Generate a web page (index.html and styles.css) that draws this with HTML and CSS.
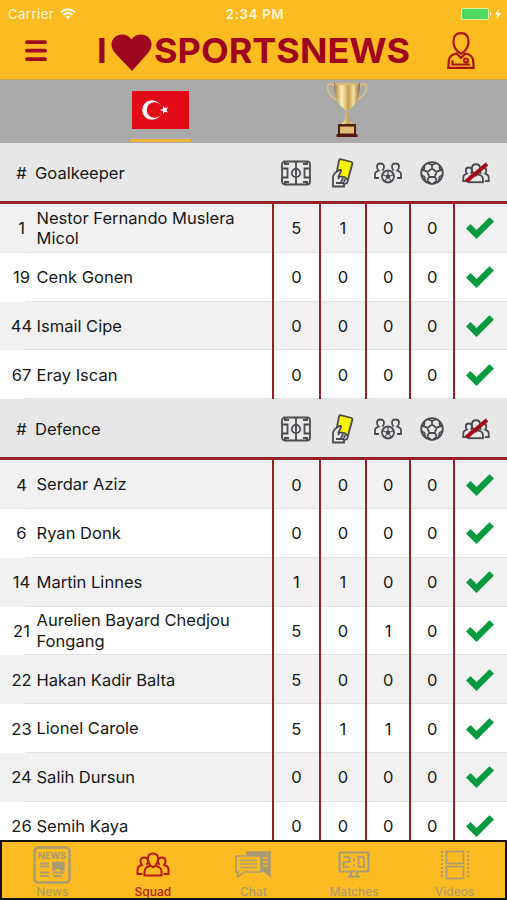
FILE: index.html
```html
<!DOCTYPE html>
<html lang="en">
<head>
    <meta charset="UTF-8">
    <meta name="viewport" content="width=device-width, initial-scale=1.0">
    <title>I Love Sportsnews - Squad</title>
    <link rel="stylesheet" href="styles.css">
</head>
<body>
    <!-- Shared icons -->
    <svg class="icon-defs" width="0" height="0">
        <symbol id="pitch" viewBox="0 0 30 26">
            <rect x="1" y="1.5" width="28" height="23" rx="3" />
            <path d="M15 2v22M1 8.500h5.500v9H1M29 8.500h-5.500v9H29M4 4h4M4 22h4M22 4h4M22 22h4M4 2v3M26 2v3M4 21v3M26 21v3" />
            <circle cx="15" cy="13" r="4.200" />
        </symbol>
        <symbol id="card" viewBox="0 0 24 30">
            <path d="M9.500 1.200l11 2.800q1.200.4.900 1.600l-4 14.500q-.4 1-1.500.8L5 18 8 2.500q.3-1.400 1.500-1.300z" fill="#f8f500" />
            <path d="M2 28.500V20q0-4 4-6.500l3-1.500q1.700 0 1 1.700L7.500 18l6 1 3.500 3-1 3-3 1.200v2.300z" fill="#e7e7e7" />
            <path d="M7 21l2-3M10 24l2-4M13 24l1-3M5 25h8" />
        </symbol>
        <symbol id="assist" viewBox="0 0 28 22">
            <path d="M8.500 8.500Q10 7 10 4.800 10 1.500 6.500 1.500T3 4.800Q3 7 4.800 8.600 1 9.500 1 12.500V16h4M19.500 8.500Q18 7 18 4.800q0-3.300 3.500-3.300T25 4.800q0 2.200-1.800 3.800Q27 9.500 27 12.500V16h-4" />
            <circle cx="14" cy="14.500" r="6" />
            <path d="M14 11.800l2.600 2-1 3h-3.200l-1-3z" fill="#4a4b50" stroke="none" />
            <path d="M14 12V8.500M16.500 13.800l3-1M15.500 16.800l2 2.500M12.500 16.800l-2 2.500M11.500 13.800l-3-1" stroke-width="1.200" />
        </symbol>
        <symbol id="ball" viewBox="0 0 24 24">
            <circle cx="12" cy="12" r="10.800" />
            <path d="M12 7.500l4.500 3.300-1.700 5.200H9.200L7.500 10.800zM12 7.500V4M16.500 10.800l3.500-1.500M14.800 16l2.200 3.500M9.200 16L7 19.500M7.500 10.800L4 9.300M8 2.200l4 1.800 4-1.800M22.500 9L20 9.300l-.5-4.500M22.500 14l-3 2-.5 4M17 19.500l-3.500 3M7 19.500l3.500 3M1.500 14l3 2 .5 4M1.500 9L4 9.300l.5-4.500" />
        </symbol>
        <symbol id="people" viewBox="0 0 34 25">
            <path d="M6.500 22H1.500v-4.500q0-3 3.200-4l1.300-.6Q4.500 11.500 4.500 9q0-3.500 3.800-3.500Q12 5.500 12 9q0 2.500-1.500 4M27.500 22h5v-4.500q0-3-3.200-4l-1.300-.6q1.500-1.400 1.500-3.900 0-3.500-3.800-3.500Q22 5.500 22 9q0 2.500 1.500 4" />
            <path d="M14.200 13.200Q12 10.500 12 6.700 12 1.500 17 1.500t5 5.200q0 3.800-2.200 6.500L17 15.300zM14 13.800L10.500 15.500Q8.500 16.700 8.500 19.500v4h17v-4q0-2.800-2-4L20 13.800" />
        </symbol>
        <symbol id="missing" viewBox="0 0 28 22">
            <use href="#people" x="0" y="1" width="28" height="20.500" class="crowd" />
            <path d="M4 19.500L25 2" class="slash" />
        </symbol>
        <symbol id="check" viewBox="0 0 28 24">
            <path d="M0 12.500L4.500 8l6 6L23.500 1.200 28 5.500 10.500 23z" />
        </symbol>
    </svg>

    <div class="header">
        <div class="status-bar">
            <div class="carrier">
                <span>Carrier</span>
                <svg width="16" height="12" viewBox="0 0 16 12">
                    <path d="M1 4.200q7-6 14 0M3.500 7q4.500-4 9 0" fill="none" stroke="#fff" stroke-width="1.800" />
                    <path d="M5.500 8.800q2.500-2 5 0L8 11.300z" fill="#fff" />
                </svg>
            </div>
            <div class="time">2:34 PM</div>
            <div class="battery">
                <svg width="41" height="12" viewBox="0 0 41 12">
                    <rect x=".5" y=".5" width="27" height="11" rx="1.500" fill="#4cd964" stroke="#e5f2a0" />
                    <path d="M29 4q2 2 0 4z" fill="#fff" />
                    <path d="M38 1l-4 5.500h2.500L35.500 11l4.500-6h-3z" fill="#fff" />
                </svg>
            </div>
        </div>
        <div class="title-bar">
            <svg class="menu" width="22" height="22" viewBox="0 0 22 22">
                <path d="M2 2.200h18M2 10.700h18M2 19.200h18" />
            </svg>
            <svg class="logo" width="320" height="48" viewBox="0 0 320 48">
                <text x="1" y="36">I</text>
                <path d="M36 44L19 26q-5-6-3-12 3-6.500 10-6.500 6 0 9.500 5 3.500-5 9.500-5 7 0 10 6.500 2 6-3 12z" />
                <text x="58" y="36" textLength="256" lengthAdjust="spacingAndGlyphs">SPORTSNEWS</text>
            </svg>
            <svg class="profile" width="28" height="38" viewBox="0 0 28 38">
                <path d="M14 1.200q7.500 0 7.500 8 0 6.500-4.500 10.300l-3 2.300-3-2.300q-4.500-3.800-4.500-10.300 0-8 7.500-8z" />
                <path d="M9.500 21.500Q3 23 2 27.500l-.7 8.300h25.400L26 27.500q-1-4.500-7.500-6L14 26zM5.500 28.500v4h17.500" />
                <circle cx="19" cy="28.500" r="2" />
            </svg>
        </div>
    </div>

    <div class="team-tabs">
        <div class="team-tab active">
            <svg width="57" height="38" viewBox="0 0 57 38">
                <rect width="57" height="38" fill="#e30a17" />
                <circle cx="20" cy="19" r="9.800" fill="#fff" />
                <circle cx="22.500" cy="19" r="7.800" fill="#e30a17" />
                <path d="M28 19l3-1.200.1-3.100 2 2.400 3-.9-1.700 2.800 1.700 2.600-3-.8-2 2.400-.1-3.100z" fill="#fff" />
            </svg>
        </div>
        <div class="team-tab">
            <svg width="42" height="56" viewBox="0 0 42 56">
                <defs>
                    <linearGradient id="gold">
                        <stop offset="0" stop-color="#a97935" />
                        <stop offset=".3" stop-color="#fff0b5" />
                        <stop offset=".55" stop-color="#c79e4c" />
                        <stop offset=".75" stop-color="#f6dda0" />
                        <stop offset="1" stop-color="#8d632b" />
                    </linearGradient>
                </defs>
                <path d="M9 4Q1-1 1.500 7q2 8 12 12.500M33 4q8-5 7.500 3-2 8-12 12.500" fill="none" stroke="#dcc083" stroke-width="1.500" />
                <path d="M8 1h26q0 19-9 25l-3 2.500.7 7q.3 4 4.300 6.500H15q4-2.500 4.300-6.500l.7-7-3-2.500Q8 20 8 1z" fill="url(#gold)" />
                <ellipse cx="21" cy="2" rx="12.500" ry="1.300" fill="#d7bb7c" />
                <path d="M12 42h18v10h1.500v3h-21v-3H12z" fill="#511b13" />
                <rect x="14" y="44.500" width="14" height="7" fill="#e2bd78" />
            </svg>
        </div>
    </div>

    <div class="squad">
        <div class="row section">
            <div class="number">#</div>
            <div class="name">Goalkeeper</div>
            <div class="cell"><svg width="30" height="26"><use href="#pitch" /></svg></div>
            <div class="cell"><svg width="24" height="30"><use href="#card" /></svg></div>
            <div class="cell"><svg width="28" height="22"><use href="#assist" /></svg></div>
            <div class="cell"><svg width="24" height="24"><use href="#ball" /></svg></div>
            <div class="cell"><svg width="28" height="22"><use href="#missing" /></svg></div>
        </div>
        <div class="row gray">
            <div class="number">1</div>
            <div class="name">Nestor Fernando Muslera Micol</div>
            <div class="cell">5</div><div class="cell">1</div><div class="cell">0</div><div class="cell">0</div>
            <div class="cell"><svg class="check"><use href="#check" /></svg></div>
        </div>
        <div class="row">
            <div class="number">19</div>
            <div class="name">Cenk Gonen</div>
            <div class="cell">0</div><div class="cell">0</div><div class="cell">0</div><div class="cell">0</div>
            <div class="cell"><svg class="check"><use href="#check" /></svg></div>
        </div>
        <div class="row gray">
            <div class="number">44</div>
            <div class="name">Ismail Cipe</div>
            <div class="cell">0</div><div class="cell">0</div><div class="cell">0</div><div class="cell">0</div>
            <div class="cell"><svg class="check"><use href="#check" /></svg></div>
        </div>
        <div class="row">
            <div class="number">67</div>
            <div class="name">Eray Iscan</div>
            <div class="cell">0</div><div class="cell">0</div><div class="cell">0</div><div class="cell">0</div>
            <div class="cell"><svg class="check"><use href="#check" /></svg></div>
        </div>

        <div class="row section">
            <div class="number">#</div>
            <div class="name">Defence</div>
            <div class="cell"><svg width="30" height="26"><use href="#pitch" /></svg></div>
            <div class="cell"><svg width="24" height="30"><use href="#card" /></svg></div>
            <div class="cell"><svg width="28" height="22"><use href="#assist" /></svg></div>
            <div class="cell"><svg width="24" height="24"><use href="#ball" /></svg></div>
            <div class="cell"><svg width="28" height="22"><use href="#missing" /></svg></div>
        </div>
        <div class="row gray">
            <div class="number">4</div>
            <div class="name">Serdar Aziz</div>
            <div class="cell">0</div><div class="cell">0</div><div class="cell">0</div><div class="cell">0</div>
            <div class="cell"><svg class="check"><use href="#check" /></svg></div>
        </div>
        <div class="row">
            <div class="number">6</div>
            <div class="name">Ryan Donk</div>
            <div class="cell">0</div><div class="cell">0</div><div class="cell">0</div><div class="cell">0</div>
            <div class="cell"><svg class="check"><use href="#check" /></svg></div>
        </div>
        <div class="row gray">
            <div class="number">14</div>
            <div class="name">Martin Linnes</div>
            <div class="cell">1</div><div class="cell">1</div><div class="cell">0</div><div class="cell">0</div>
            <div class="cell"><svg class="check"><use href="#check" /></svg></div>
        </div>
        <div class="row">
            <div class="number">21</div>
            <div class="name">Aurelien Bayard Chedjou Fongang</div>
            <div class="cell">5</div><div class="cell">0</div><div class="cell">1</div><div class="cell">0</div>
            <div class="cell"><svg class="check"><use href="#check" /></svg></div>
        </div>
        <div class="row gray">
            <div class="number">22</div>
            <div class="name">Hakan Kadir Balta</div>
            <div class="cell">5</div><div class="cell">0</div><div class="cell">0</div><div class="cell">0</div>
            <div class="cell"><svg class="check"><use href="#check" /></svg></div>
        </div>
        <div class="row">
            <div class="number">23</div>
            <div class="name">Lionel Carole</div>
            <div class="cell">5</div><div class="cell">1</div><div class="cell">1</div><div class="cell">0</div>
            <div class="cell"><svg class="check"><use href="#check" /></svg></div>
        </div>
        <div class="row gray">
            <div class="number">24</div>
            <div class="name">Salih Dursun</div>
            <div class="cell">0</div><div class="cell">0</div><div class="cell">0</div><div class="cell">0</div>
            <div class="cell"><svg class="check"><use href="#check" /></svg></div>
        </div>
        <div class="row">
            <div class="number">26</div>
            <div class="name">Semih Kaya</div>
            <div class="cell">0</div><div class="cell">0</div><div class="cell">0</div><div class="cell">0</div>
            <div class="cell"><svg class="check"><use href="#check" /></svg></div>
        </div>
    </div>

    <div class="tab-bar">
        <div class="tab">
            <svg width="38" height="38" viewBox="0 0 38 38">
                <rect x="1.500" y="1.500" width="35" height="35" rx="4" stroke-width="2.500" />
                <text x="5" y="13" textLength="28" lengthAdjust="spacingAndGlyphs">NEWS</text>
                <path d="M7 17.500h9M7 20.500h9M7 26.500h9M7 30h9M20 26.500h11M20 30h9" stroke-width="2.200" />
                <path d="M20 16.500h11v7.500h-3l-3-3-3 3h-2z" fill="#a99b72" />
            </svg>
            <span>News</span>
        </div>
        <div class="tab active">
            <svg width="34" height="25"><use href="#people" /></svg>
            <span>Squad</span>
        </div>
        <div class="tab">
            <svg width="38" height="30" viewBox="0 0 38 30">
                <path d="M13 5V2h23v24l-6-5h-3" fill="#a99b72" />
                <path d="M2 6h25v16H10l-6 5v-5H2z" fill="#fcbb21" />
                <path d="M6 10.500h17M6 14h17M6 17.500h17" />
                <path d="M29 8h5M29 12h5M29 16h5" stroke="#fcbb21" />
            </svg>
            <span>Chat</span>
        </div>
        <div class="tab">
            <svg width="32" height="28" viewBox="0 0 32 28">
                <rect x="1.500" y="1.500" width="29" height="19" rx="1.500" stroke-width="2.200" />
                <path d="M5.500 6h6v5h-6v5h6M20.500 6h5.500v10h-5.500z" stroke-dasharray="2.500 .5" stroke-width="2.200" />
                <path d="M16 7.500v2.500M16 13v2.500M13 21v4M19 21v4M10 25.500h12" stroke-width="2" />
            </svg>
            <span>Matches</span>
        </div>
        <div class="tab">
            <svg width="30" height="30" viewBox="0 0 30 30">
                <rect x="6.500" y="1.500" width="17" height="12" />
                <rect x="6.500" y="16.500" width="17" height="12" />
                <path d="M2 1v28M28 1v28" stroke-dasharray="2 2" stroke-width="2" />
            </svg>
            <span>Videos</span>
        </div>
    </div>
</body>
</html>
```

FILE: styles.css
```css
* {
    box-sizing: border-box;
}

body {
    margin: 0;
    height: 900px;
    overflow: hidden;
    display: flex;
    flex-direction: column;
    background-color: #fff;
    color: #181818;
    font-family: Inter, "Liberation Sans", sans-serif;
}

svg {
    display: block;
    flex-shrink: 0;
}

.icon-defs {
    position: absolute; /* Keep the definitions out of the layout */
}

.header {
    height: 80px;
    flex-shrink: 0;
    background-color: #fcbb21;
    border-bottom: 1px solid #c0a35d;
}

/* Status bar */
.status-bar {
    display: grid;
    grid-template-columns: 1fr 1fr 1fr;
    align-items: center;
    height: 27px;
    padding: 0 5px 0 8px;
    color: #fff8df;
    font-size: 13px;
}

.carrier {
    display: flex;
    align-items: center;
    gap: 6px;
    letter-spacing: 0.5px;
}

.time {
    text-align: center;
    font-weight: 600;
    letter-spacing: 0.8px;
}

.battery {
    display: flex;
    justify-content: flex-end;
}

/* Title bar */
.title-bar {
    display: flex;
    align-items: center;
    height: 48px;
    padding: 0 32px 0 25px;
}

.menu {
    fill: none;
    stroke: #a00c1c;
    stroke-width: 3.8;
    stroke-linecap: round;
}

.logo {
    margin-left: 49px;
    fill: #9e0620;
    font-size: 34.5px;
    font-weight: 700;
}

.profile {
    margin-left: auto;
    fill: none;
    stroke: #a51519;
    stroke-width: 2.2;
}

/* Flag and cup */
.team-tabs {
    display: flex;
    justify-content: center;
    gap: 126px;
    height: 63px;
    flex-shrink: 0;
    background-color: #aaa;
}

.team-tab {
    display: flex;
    justify-content: center;
    width: 61px;
    height: 62px;
    padding-top: 2px;
}

.team-tab.active {
    padding-top: 11px;
    border-bottom: 3px solid #efb637;
}

/* Player list */
.squad {
    flex: 1;
    min-height: 0;
    overflow: hidden;
}

.row {
    display: grid;
    grid-template-columns: 35px 237px 46.7px 46.5px 44px 44.3px 1fr;
    height: 48.8px;
    font-size: 16.55px;
    background-color: #fff;
    background-image: linear-gradient(#e2e2e2, #e2e2e2);
    background-size: calc(100% - 25px) 1px;
    background-position: right bottom;
    background-repeat: no-repeat;
}

.gray {
    background-color: #f1f1f1;
}

.number {
    display: flex;
    align-items: center;
    justify-content: center;
    padding-left: 8px;
}

.name {
    display: flex;
    align-items: center;
    padding: 0 30px 0 1.5px;
    line-height: 20.5px;
}

.cell {
    display: flex;
    align-items: center;
    justify-content: center;
    border-left: 2.5px solid #932126;
}

.check {
    width: 28px;
    height: 24px;
    margin-left: -3px;
    fill: #079a40;
}

/* Section headings with the stat icons */
.section {
    height: 61px;
    background-color: #e7e7e7;
    background-image: none;
    border-bottom: 3px solid #932126;
}

.section .number,
.section .name {
    padding-top: 2px;
}

.section .name {
    padding-left: 0;
}

.section .cell {
    border-color: transparent;
    padding-top: 2px;
}

.section .cell:last-child svg {
    margin-left: -11px;
}

.section svg {
    fill: none;
    stroke: #4a4b50;
    stroke-width: 1.8;
}

.crowd {
    stroke-width: 2.2;
}

.slash {
    stroke: #a60c18;
    stroke-width: 4;
}

/* Bottom tabs */
.tab-bar {
    display: flex;
    height: 60px;
    flex-shrink: 0;
    background-color: #fcbb21;
    border: 2px solid #111;
}

.tab {
    flex: 1;
    display: flex;
    flex-direction: column;
    align-items: center;
    justify-content: space-between;
    padding-top: 2px;
    color: #b19b65;
    font-size: 12px;
    font-weight: 500;
    line-height: 13px;
}

.tab svg {
    margin: auto;
    fill: none;
    stroke: #a99b72;
    stroke-width: 1.6;
}

.tab text {
    fill: #a99b72;
    stroke: none;
    font-size: 9px;
    font-weight: 800;
}

.tab.active {
    color: #b51b16;
}

.tab.active svg {
    stroke: #b51b16;
    stroke-width: 2;
}
```
